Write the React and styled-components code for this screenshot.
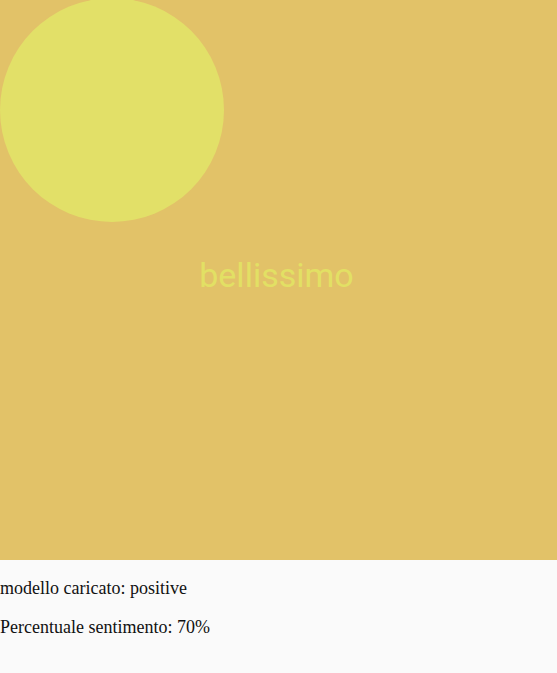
import React from "react";
import styled, { createGlobalStyle } from "styled-components";

const GlobalStyle = createGlobalStyle`
    html, body {
        margin: 0;
        padding: 0;
        background: #fafafa;
    }
    body {
        font-family: "Liberation Serif", "Times New Roman", serif;
        font-size: 18px;
        color: #111;
    }
`;

const Stage = styled.div`
    position: relative;
    height: 560px;
    background: #e2c268;
    display: flex;
    align-items: center;
    justify-content: center;
    overflow: hidden;
`;

const Sun = styled.div`
    position: absolute;
    left: 0;
    top: -2px;
    width: ${props => props.size}px;
    height: ${props => props.size}px;
    border-radius: 50%;
    background: #e2e068;
`;

const Word = styled.span`
    font-family: Roboto, "Noto Sans", sans-serif;
    font-size: 34px;
    color: #e2e064;
    margin: 0 4px 10px 0;
`;

const Info = styled.p`
    margin: 18px 0;
`;

const App = () => {
    return (
        <>
            <GlobalStyle />
            <Stage>
                <Sun size={224} />
                <Word>bellissimo</Word>
            </Stage>
            <Info>modello caricato: positive</Info>
            <Info>Percentuale sentimento: 70%</Info>
        </>
    );
};

export default App;
